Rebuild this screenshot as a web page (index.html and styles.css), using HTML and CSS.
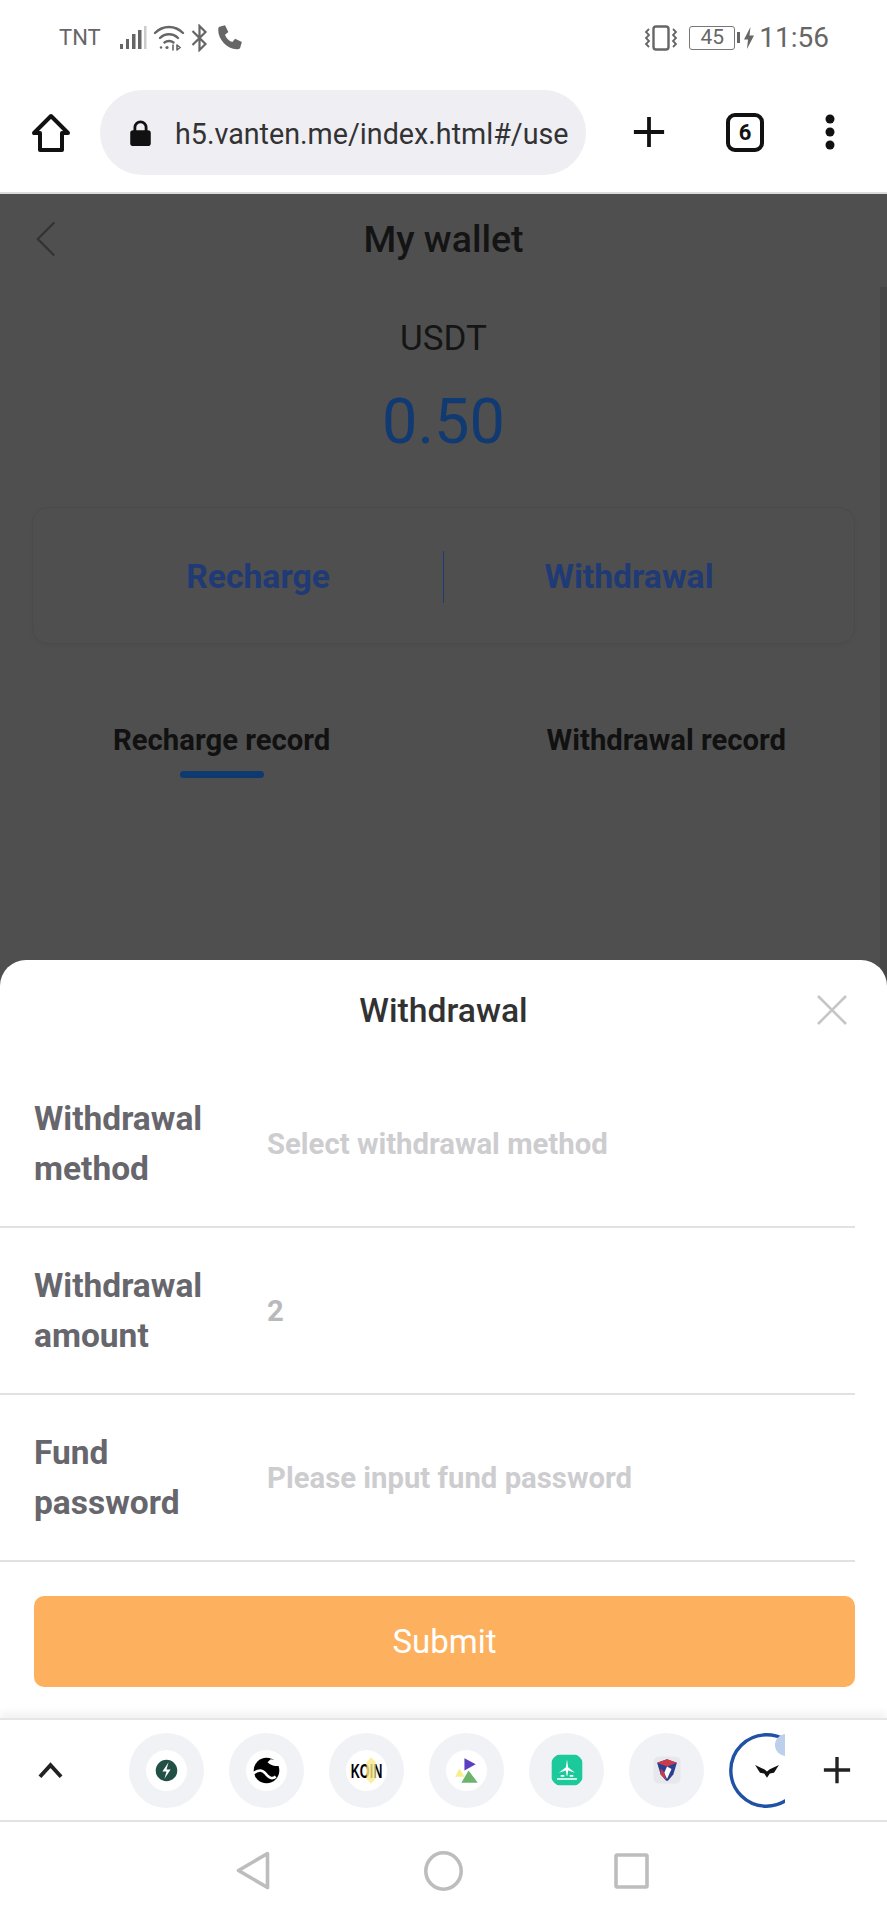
FILE: index.html
```html
<!DOCTYPE html>
<html lang="en">
<head>
<meta charset="utf-8">
<title>My wallet</title>
<link rel="stylesheet" href="styles.css">
</head>
<body>
<div class="phone">
  <header class="statusbar">
    <div class="status-left">
      <span class="carrier">TNT</span>
      <svg class="ic-signal" viewBox="0 0 28 26"><rect x="1" y="19" width="3" height="5" fill="#666"/><rect x="7" y="14" width="3" height="10" fill="#666"/><rect x="13" y="9" width="3.500" height="15" fill="#666"/><rect x="19" y="5" width="3.500" height="19" fill="#666"/><rect x="25" y="1" width="2.500" height="23" fill="#ccc"/></svg>
      <svg class="ic-wifi" viewBox="0 0 32 26" fill="none" stroke="#666" stroke-width="2.400" stroke-linecap="round"><path d="M2 8C10 0 22 0 30 8"/><path d="M7 13C12 8 20 8 25 13"/><path d="M11.500 17.500C14 15.500 18 15.500 20.500 17.500"/><circle cx="14" cy="22.500" r="1.600" fill="#666" stroke="none"/><circle cx="8" cy="22.500" r="1.200" fill="#666" stroke="none"/><path d="M20 20v5M24 20v5M24 20l3 2.500-3 2.500" stroke-width="1.600"/></svg>
      <svg class="ic-bt" viewBox="0 0 18 28" fill="none" stroke="#666" stroke-width="2.200"><path d="M2 7l13 13-6 6V2l6 6L2 21"/></svg>
      <svg class="ic-phone" viewBox="0 0 24 24"><path d="M3 2.500l5-1.500 3 6-3 2.500c1 3 3.500 5.500 6.500 6.500l2.500-3 6 3-1.500 5c-.5 1.200-1.500 1.500-3 1.500C9.500 22 2 13.500 2 5.500c0-1.500.2-2.500 1-3z" fill="#666"/></svg>
    </div>
    <div class="status-right">
      <svg class="ic-vibrate" viewBox="0 0 34 26" fill="none" stroke="#666"><rect x="9.500" y="1.500" width="15" height="23" rx="2.500" stroke-width="2.400"/><path d="M5 4l-3 3 3 3-3 3 3 3-3 3 3 3M29 4l3 3-3 3 3 3-3 3 3 3-3 3" stroke-width="1.800"/></svg>
      <span class="battery"><span class="battery-level">45</span></span>
      <span class="battery-cap"></span>
      <svg class="ic-bolt" viewBox="0 0 10 22"><path d="M6.500 0L0 12.500h4L3 22 10 8.500H5.500z" fill="#666"/></svg>
      <span class="clock">11:56</span>
    </div>
  </header>

  <nav class="browserbar">
    <svg class="ic-home" viewBox="0 0 40 40" fill="none" stroke="#111" stroke-width="4" stroke-linejoin="round"><path d="M20 3L3 20h6v17h22V20h6z"/></svg>
    <div class="urlbar">
      <svg class="ic-lock" viewBox="0 0 24 30"><path d="M6 13V9a6 6 0 0 1 12 0v4" fill="none" stroke="#111" stroke-width="3"/><rect x="1" y="12" width="22" height="17" rx="3" fill="#111"/></svg>
      <span class="url">h5.vanten.me/index.html#/use</span>
    </div>
    <svg class="ic-plus" viewBox="0 0 36 36"><path d="M18 2v32M2 18h32" stroke="#111" stroke-width="4"/></svg>
    <span class="tabcount">6</span>
    <svg class="ic-more" viewBox="0 0 10 36"><circle cx="5" cy="5" r="4.500" fill="#111"/><circle cx="5" cy="18" r="4.500" fill="#111"/><circle cx="5" cy="31" r="4.500" fill="#111"/></svg>
  </nav>

  <main class="viewport">
    <div class="page">
      <div class="titlebar">
        <svg class="ic-back" viewBox="0 0 24 40" fill="none" stroke="#333" stroke-width="2.400"><path d="M21 2L3 20l18 18"/></svg>
        <h1 class="title">My wallet</h1>
      </div>
      <div class="asset">USDT</div>
      <div class="balance">0.50</div>
      <div class="actions">
        <span class="action">Recharge</span>
        <span class="action-divider"></span>
        <span class="action">Withdrawal</span>
      </div>
      <div class="tabs">
        <div class="tab tab-active">Recharge record</div>
        <div class="tab">Withdrawal record</div>
      </div>
    </div>
    <div class="scrollbar"></div>
    <div class="sheet">
      <div class="sheet-head">
        <h2 class="sheet-title">Withdrawal</h2>
        <svg class="ic-close" viewBox="0 0 32 32"><path d="M2 2l28 28M30 2L2 30" stroke="#c6c6c6" stroke-width="2.600"/></svg>
      </div>
      <div class="field"><label class="field-label">Withdrawal method</label><span class="field-value">Select withdrawal method</span></div>
      <div class="field"><label class="field-label">Withdrawal amount</label><span class="field-value field-filled">2</span></div>
      <div class="field"><label class="field-label">Fund password</label><span class="field-value">Please input fund password</span></div>
      <button class="submit" type="button">Submit</button>
    </div>
  </main>

  <div class="shortcuts">
    <svg class="ic-up" viewBox="0 0 26 18" fill="none" stroke="#222" stroke-width="4"><path d="M2 16L13 4l11 12"/></svg>
    <div class="apps">
      <span class="app"><svg class="app-ic" viewBox="0 0 40 40"><circle cx="20" cy="20" r="10.500" fill="#235045"/><path d="M22 12l-6 9h4l-2 7 6-9h-4z" fill="#fff"/></svg></span>
      <span class="app"><svg class="app-ic" viewBox="0 0 40 40"><circle cx="20" cy="20" r="12.500" fill="#000"/><path d="M7 23C12 19 16 19 19 23S25 29 29 26" fill="none" stroke="#fff" stroke-width="2.600"/><path d="M21 12C25 16 29 16 33 15L30 10 24 9z" fill="#fff"/></svg></span>
      <span class="app"><svg class="app-ic" viewBox="0 0 40 40"><text class="koin" transform="translate(20 27) scale(.88 1.450)" text-anchor="middle">KOIN</text><path d="M24.500 7l4.500 5v16l-4.500 5-4.500-5V12z" class="koin-hex"/></svg></span>
      <span class="app"><svg class="app-ic" viewBox="0 0 40 40"><polygon points="18,8 29,14 18,20" fill="#5a3fc0"/><polygon points="22,20 31,32 15,32" fill="#6db36b"/><polygon points="13,18 18,26 9,26" fill="#f5f08a"/></svg></span>
      <span class="app"><svg class="app-ic app-ic-big" viewBox="0 0 40 40"><rect x="3" y="3" width="34" height="34" rx="8" fill="#1cc99a"/><path d="M20 8l1.200 9 7.800 6-7.800-2.500-.7 6h-1l-.7-6-7.800 2.500 7.800-6z" fill="#fff"/><path d="M9 30h22M13 26.500h4M23 26.500h4" stroke="#fff" stroke-width="1.800"/></svg></span>
      <span class="app"><svg class="app-ic app-ic-big" viewBox="0 0 40 40"><rect x="5" y="5" width="30" height="30" rx="6" fill="#e8e8ec"/><polygon points="9,12 20,8 31,12 27,25 21,32 19,32 13,25" fill="#2b3f90"/><polygon points="9,12 20,8 31,12 20,16" fill="#cf3a4a"/><polygon points="20,16 25,19 20,30 17,23" fill="#fff"/><polygon points="13,18 17,23 19,31 13,25" fill="#cf3a4a"/></svg></span>
      <span class="app app-loading"><svg class="ic-ring" viewBox="0 0 75 75"><circle cx="37.500" cy="37.500" r="35.700" fill="none" stroke="#1f51a5" stroke-width="3.400"/><circle cx="57" cy="12" r="11" fill="#bcd0ec"/></svg><svg class="app-ic app-wing" viewBox="0 0 40 40"><path d="M3 13l13 6 4 3 4-3 13-6-7 11-6 1-4 6-4-6-6-1z" fill="#111"/></svg></span>
    </div>
    <svg class="ic-add" viewBox="0 0 32 32"><path d="M16 2v28M2 16h28" stroke="#222" stroke-width="3.600"/></svg>
  </div>

  <footer class="navbar">
    <svg class="nav-back" viewBox="0 0 34 39" fill="none" stroke="#bdbdbd" stroke-width="3.600" stroke-linejoin="round"><path d="M31.500 2.500L2.500 19.500l29 17z"/></svg>
    <svg class="nav-home" viewBox="0 0 39 40" fill="none" stroke="#bdbdbd" stroke-width="3.600"><ellipse cx="19.500" cy="20" rx="17.700" ry="18.200"/></svg>
    <svg class="nav-recent" viewBox="0 0 35 36" fill="none" stroke="#bdbdbd" stroke-width="3.600" stroke-linejoin="round"><rect x="2" y="2" width="31" height="32" rx="1"/></svg>
  </footer>
</div>
</body>
</html>
```
FILE: styles.css
```css
* { box-sizing: border-box; }
html, body { margin: 0; padding: 0; background: #fff; }
body { font-family: Roboto, "Liberation Sans", sans-serif; }
.phone { width: 887px; height: 1920px; display: flex; flex-direction: column; overflow: hidden; background: #fff; }

.statusbar { height: 72px; flex: none; display: flex; justify-content: space-between; align-items: center; padding: 3px 58px 0 59px; color: #666; }
.status-left, .status-right { display: flex; align-items: center; }
.carrier { font-size: 22px; width: 60px; }
.ic-signal { width: 28px; height: 26px; }
.ic-wifi { width: 32px; height: 26px; margin-left: 6px; }
.ic-bt { width: 21px; height: 28px; margin-left: 4px; }
.ic-phone { width: 27px; height: 27px; margin-left: 6px; }
.ic-vibrate { width: 34px; height: 26px; }
.battery { width: 46px; height: 24px; border: 1.500px solid #777; border-radius: 3px; margin-left: 11px; display: flex; align-items: center; justify-content: center; }
.battery-level { font-size: 21px; line-height: 1; color: #666; }
.battery-cap { width: 3px; height: 11px; background: #666; margin-left: 2px; }
.ic-bolt { width: 10px; height: 22px; margin-left: 4px; }
.clock { font-size: 28px; margin-left: 5px; color: #666; }

.browserbar { height: 120px; flex: none; display: flex; align-items: center; padding: 0 0 0 31px; }
.ic-home { width: 40px; height: 40px; flex: none; margin-top: 2px; }
.urlbar { width: 486px; height: 85px; margin-left: 29px; margin-top: 1px; background: #eeeef3; border-radius: 43px; display: flex; align-items: center; padding-left: 29px; flex: none; }
.ic-lock { width: 23px; height: 28px; flex: none; }
.url { font-size: 28.700px; color: #333; margin-left: 23px; margin-top: 3px; white-space: nowrap; }
.ic-plus { width: 34px; height: 34px; margin-left: 46px; flex: none; }
.tabcount { width: 38px; height: 39px; margin-left: 60px; margin-top: 1px; border: 4px solid #111; border-radius: 9px; display: flex; align-items: center; justify-content: center; font-size: 22px; font-weight: 700; color: #111; flex: none; }
.ic-more { width: 10px; height: 36px; margin-left: 61px; flex: none; }

.viewport { position: relative; height: 1526px; flex: none; overflow: hidden; background: #fff; border-top: 2px solid #dcdcdc; }
.page { height: 100%; background: #4f4f4f; color: #111; padding: 0 32px; display: flex; flex-direction: column; }
.titlebar { position: relative; height: 90px; flex: none; display: flex; align-items: center; justify-content: center; }
.ic-back { position: absolute; left: 3px; top: 26px; width: 22px; height: 38px; }
.title { margin: 0; font-size: 37.500px; font-weight: 500; color: #141414; }
.asset { margin-top: 35px; text-align: center; font-size: 35px; line-height: 40px; color: #151515; }
.balance { margin-top: 27px; text-align: center; font-size: 63px; line-height: 72px; color: #123a72; }
.actions { margin-top: 49px; height: 137px; flex: none; display: flex; align-items: center; padding: 2px 40px 0 40px; border: 1px solid #4a4a4a; border-radius: 16px; box-shadow: 0 2px 4px rgba(0,0,0,.03); }
.action { flex: 1; font-size: 33.700px; font-weight: 700; text-align: center; color: #1f3a75; }
.action-divider { width: 1px; height: 52px; background: #1f3a75; }
.tabs { margin-top: 78px; display: flex; justify-content: space-between; padding: 0 69px 0 81px; }
.tab { position: relative; font-size: 29.300px; font-weight: 700; color: #111; line-height: 36px; }
.tab-active::after { content: ""; position: absolute; left: 50%; bottom: -20px; width: 84px; height: 7px; margin-left: -42px; border-radius: 4px; background: #0f3a70; }
.scrollbar { position: absolute; right: 0; top: 93px; bottom: 0; width: 7px; background: #474747; }

.sheet { position: absolute; left: 0; right: 0; bottom: 0; height: 758px; background: #fff; border-radius: 26px 26px 0 0; display: flex; flex-direction: column; }
.sheet-head { position: relative; height: 101px; flex: none; display: flex; align-items: center; justify-content: center; }
.sheet-title { margin: 0; font-size: 33.700px; font-weight: 500; color: #323232; }
.ic-close { position: absolute; right: 39px; top: 34px; width: 32px; height: 32px; }
.field { height: 167px; flex: none; width: 855px; border-bottom: 2px solid #e1e1e4; display: flex; align-items: center; padding-left: 34px; }
.field-label { width: 233px; flex: none; padding-right: 40px; font-size: 33.500px; font-weight: 700; line-height: 50px; color: #66666c; }
.field-value { font-size: 29.300px; font-weight: 700; color: #cdcdd0; }
.field-filled { color: #b9b9bc; }
.submit { align-self: flex-start; width: 821px; height: 91px; margin: 34px 0 0 34px; border: 0; border-radius: 10px; background: #fdb15f; color: #fff; font: 400 33px Roboto, "Liberation Sans", sans-serif; }

.shortcuts { height: 104px; flex: none; display: flex; align-items: center; border-top: 2px solid #e6e6e6; border-bottom: 2px solid #e2e2e2; box-shadow: 0 -6px 8px rgba(0,0,0,.05); position: relative; padding-left: 38px; }
.ic-up { width: 25px; height: 18px; flex: none; }
.apps { display: flex; gap: 25px; width: 656px; margin-left: 66px; overflow: hidden; flex: none; }
.app { width: 75px; height: 75px; flex: none; border-radius: 50%; background: #f1f2f5; display: flex; align-items: center; justify-content: center; position: relative; }
.app-ic { width: 41px; height: 41px; background: #fff; border-radius: 50%; }
.app-ic-big { background: transparent; width: 36px; height: 36px; }
.koin { font-family: "Liberation Sans", sans-serif; font-size: 14px; font-weight: 700; }
.koin-hex { fill: #fbe98a; opacity: .8; }
.app-loading { background: #fff; }
.ic-ring { position: absolute; left: 0; top: 0; width: 75px; height: 75px; }
.app-wing { position: relative; width: 28px; height: 28px; background: transparent; }
.ic-add { width: 30px; height: 30px; margin-left: 37px; flex: none; }

.navbar { flex: 1; display: flex; align-items: flex-start; padding-top: 29px; padding-left: 236px; }
.nav-back { width: 34px; height: 39px; flex: none; }
.nav-home { width: 39px; height: 40px; margin-left: 154px; flex: none; }
.nav-recent { width: 35px; height: 36px; margin-left: 151px; margin-top: 2px; flex: none; }
```
